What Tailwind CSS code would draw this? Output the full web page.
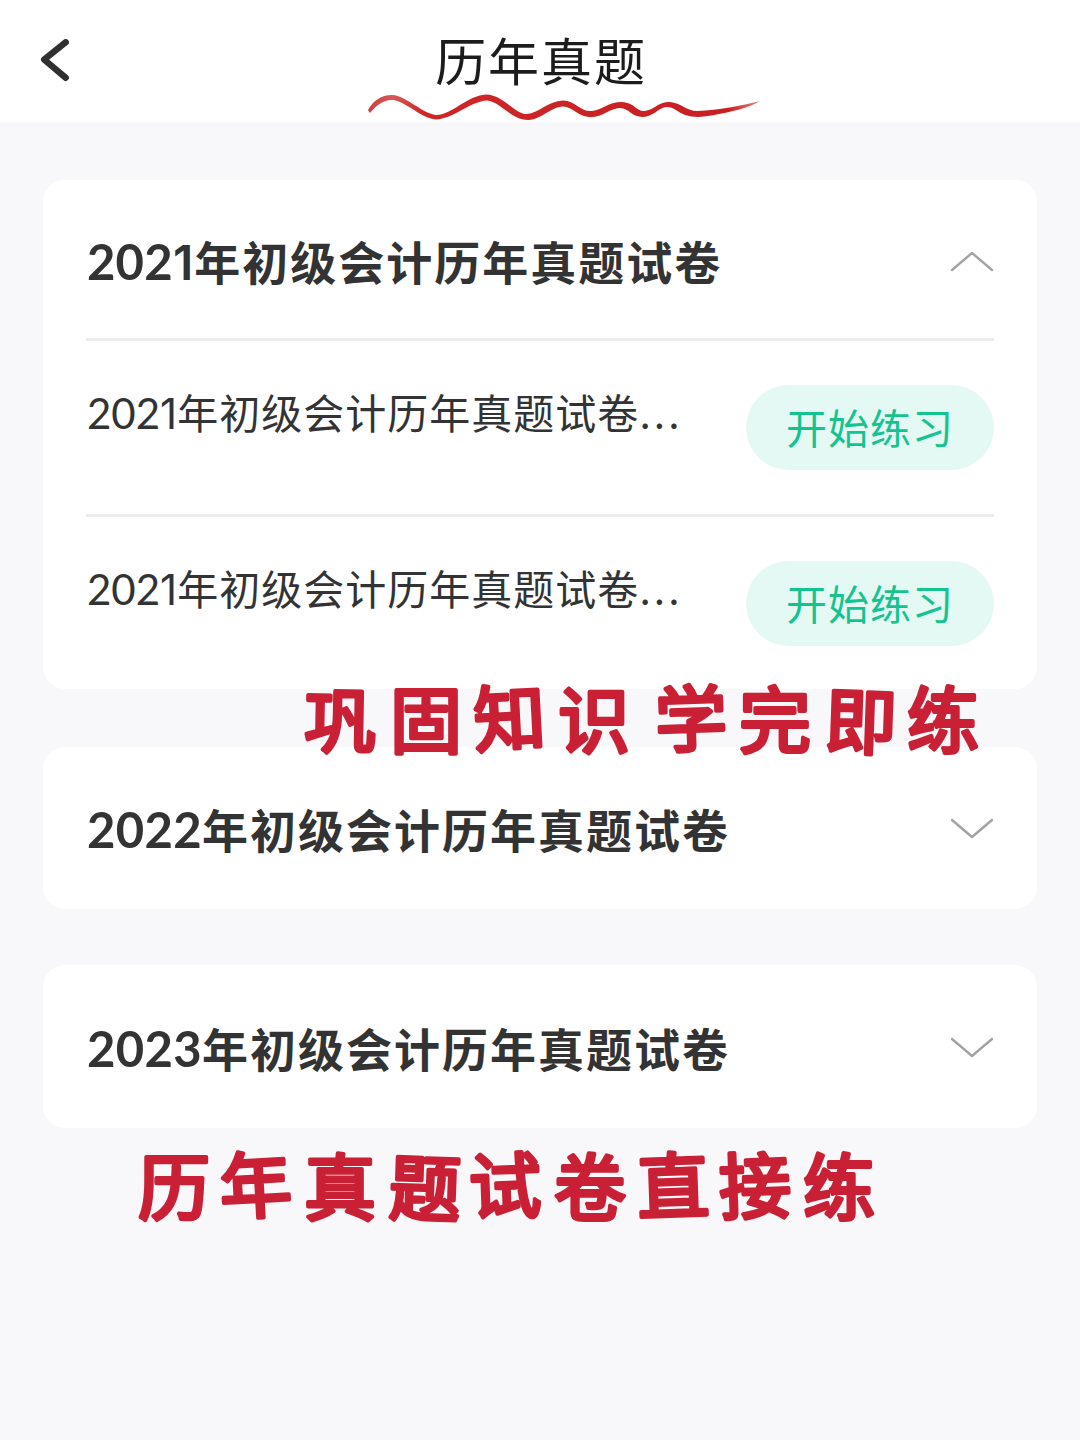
<!DOCTYPE html>
<html lang="zh-CN">

<head>
    <meta charset="UTF-8">
    <meta name="viewport" content="width=device-width, initial-scale=1.0">
    <title>历年真题</title>
    <script src="https://cdn.jsdelivr.net/npm/@tailwindcss/browser@4"></script>
</head>

<body class="relative min-h-screen overflow-hidden bg-[#f8f8fa] font-['Noto_Sans_CJK_SC',sans-serif] text-[#333333]">
    <header class="grid h-[122px] grid-cols-[1fr_auto_1fr] items-center bg-white px-10">
        <button aria-label="返回" class="w-8">
            <svg class="h-11 w-8" viewBox="0 0 32 44" fill="none" stroke="#303030" stroke-width="6.4" stroke-linecap="round" stroke-linejoin="round">
                <path d="M25.7 3.3 4.2 20.6 25.7 38.8" />
            </svg>
        </button>
        <h1 class="pb-1 pl-0.5 text-[51px] leading-[118px] tracking-[1.9px] text-[#1c1c1c]">历年真题</h1>
    </header>

    <main class="px-[43px] pt-[58px]">
        <section class="h-[509px] rounded-[22px] bg-white px-[43px]">
            <div class="flex h-[158px] items-center justify-between pt-1 pl-px">
                <h2 class="text-[46px] leading-[70px] font-bold tracking-[2px] whitespace-nowrap"><span class="font-['Lato'] text-[49px] tracking-[0.2px]">202<span class="font-['Inter'] text-[48px] font-semibold tracking-[1px]">1</span></span>年初级会计历年真题试卷</h2>
                <svg class="mb-0.5 h-6 w-11" viewBox="0 0 44 24" fill="none" stroke="#a3a3a3" stroke-width="2.4" stroke-linecap="round" stroke-linejoin="round">
                    <path d="M2 22 22 5 42 22" />
                </svg>
            </div>
            <div class="flex h-[176px] items-start justify-between border-t-3 border-[#ededed] pt-11 pl-px">
                <p class="-mt-0.5 text-[41px] leading-[56px] tracking-[1px] whitespace-nowrap"><span class="font-['Lato'] text-[42px] tracking-normal">202<span class="font-['Inter']">1</span></span>年初级会计历年真题试卷<span class="font-['Inter'] tracking-[2.6px]">...</span></p>
                <button class="h-[85px] w-[248px] rounded-full bg-[#e4f9f4] pb-0.5 text-[41px] leading-[83px] tracking-[1px] text-[#15c38e]">开始练习</button>
            </div>
            <div class="flex h-[175px] items-start justify-between border-t-3 border-[#ededed] pt-11 pl-px">
                <p class="-mt-0.5 text-[41px] leading-[56px] tracking-[1px] whitespace-nowrap"><span class="font-['Lato'] text-[42px] tracking-normal">202<span class="font-['Inter']">1</span></span>年初级会计历年真题试卷<span class="font-['Inter'] tracking-[2.6px]">...</span></p>
                <button class="h-[85px] w-[248px] rounded-full bg-[#e4f9f4] pb-0.5 text-[41px] leading-[83px] tracking-[1px] text-[#15c38e]">开始练习</button>
            </div>
        </section>

        <section class="mt-[58px] flex h-[162px] items-center justify-between rounded-[22px] bg-white pr-[43px] pl-11">
            <h2 class="text-[46px] leading-[70px] font-bold tracking-[2px] whitespace-nowrap"><span class="font-['Lato'] text-[49px] tracking-[0.3px]">2022</span>年初级会计历年真题试卷</h2>
            <svg class="h-6 w-11" viewBox="0 0 44 24" fill="none" stroke="#a3a3a3" stroke-width="2.4" stroke-linecap="round" stroke-linejoin="round">
                <path d="M2 4 22 21 42 4" />
            </svg>
        </section>

        <section class="mt-14 flex h-[163px] items-center justify-between rounded-[22px] bg-white pr-[43px] pl-11">
            <h2 class="pt-0.5 text-[46px] leading-[70px] font-bold tracking-[2px] whitespace-nowrap"><span class="font-['Lato'] text-[49px] tracking-[0.3px]">2023</span>年初级会计历年真题试卷</h2>
            <svg class="h-6 w-11" viewBox="0 0 44 24" fill="none" stroke="#a3a3a3" stroke-width="2.4" stroke-linecap="round" stroke-linejoin="round">
                <path d="M2 4 22 21 42 4" />
            </svg>
        </section>
    </main>

    <!-- marker notes over the page -->
    <svg class="pointer-events-none absolute top-0 left-0 h-[1440px] w-[1080px]" viewBox="0 0 1080 1440">
        <defs>
            <linearGradient id="ink" x1="0" x2="1">
                <stop offset="0" stop-color="#d03c3c" />
                <stop offset="0.06" stop-color="#d65a5a" />
                <stop offset="0.14" stop-color="#cf2626" />
                <stop offset="0.92" stop-color="#c91f22" />
                <stop offset="1" stop-color="#e08a8a" />
            </linearGradient>
        </defs>
        <path fill="url(#ink)" d="M368 110C373 101 381 95 392 95C407 96 421 113 436 115C452 115 466 96 486 94.500C504 95 514 114 527 114C539 113 548 101 563 100.500C576 101 580 112 592 111C602 110 608 102 622 102C635 103 636 111 644 111C655 110 657 102 670 102C681 103 687 111 697 111C719 110 741 106 760 101C749 108 731 112 714 115C704 117 694 118 685 115C677 112 675 107 666 107C658 108 653 117 643 117C631 117 629 108 620 108C610 108 602 118 589 117C577 116 573 107 563 106.500C550 107 543 119 528 120C510 119 501 102 487 100.500C471 101 453 119 436 119.500C420 118 406 101 392 100C382 100 375 107 370 113Z" />
        <g fill="#c92035" stroke="#c92035" stroke-width="4" stroke-linejoin="round" font-family="Noto Sans CJK SC" font-size="72" font-weight="400">
            <text x="304 390 475 558 656 739 824 907" y="747" rotate="1 0 -3 0 -2 0 2 0">巩固知识学完即练</text>
            <text x="138 221 304 388 470 554 638 720 803" y="1214" rotate="0 -3 0 2 -2 0 -2 -2 0">历年真题试卷直接练</text>
        </g>
    </svg>
</body>

</html>
